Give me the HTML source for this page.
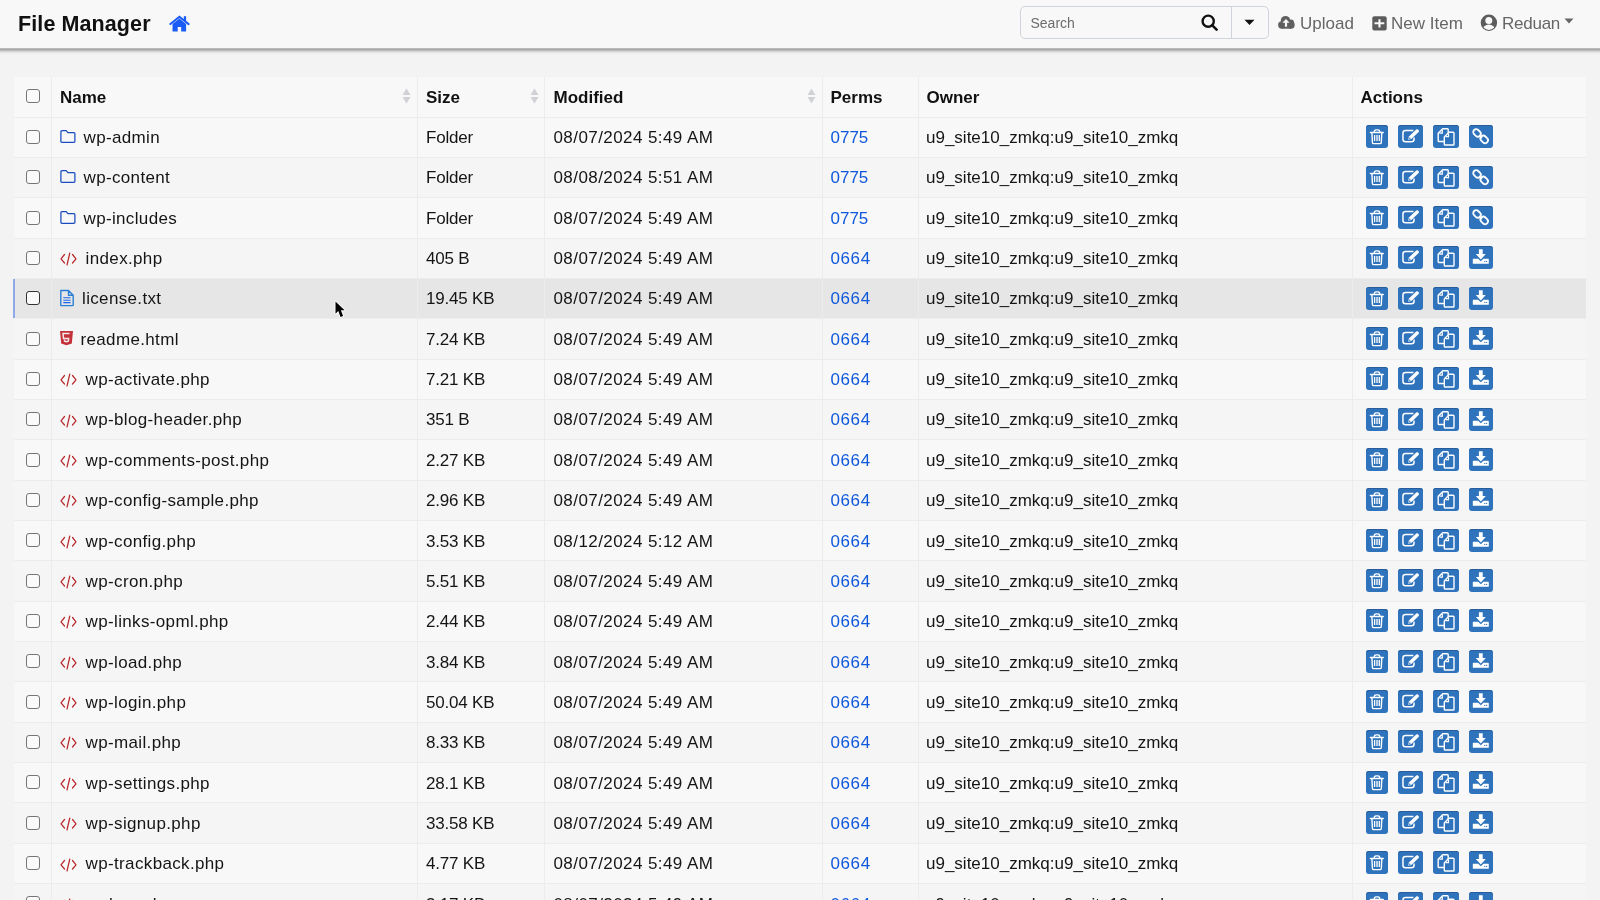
<!DOCTYPE html>
<html><head><meta charset="utf-8"><title>File Manager</title><style>
*{margin:0;padding:0;box-sizing:border-box}
html,body{width:1600px;height:900px;overflow:hidden}
body{-webkit-font-smoothing:antialiased;background:#f3f3f3;font-family:"Liberation Sans",sans-serif;color:#111;position:relative}
.nav{will-change:transform;position:absolute;left:0;top:0;width:1600px;height:48px;background:#f8f8f8;z-index:5}
.shadow{position:absolute;left:0;top:48px;width:1600px;height:7px;z-index:4;
 background:linear-gradient(#c2c2c2 0px,#a9a9a9 1.5px,#bcbcbc 2.5px,#d3d3d3 3.5px,#e6e6e6 4.5px,#eeeeee 5.5px,#f3f3f3 7px)}
.brand{position:absolute;left:18px;top:11.5px;font-size:21.5px;font-weight:bold;color:#111;letter-spacing:0.1px}
.search{position:absolute;left:1020px;top:6px;width:249px;height:33px;border:1px solid #cfd4da;border-radius:5px;background:#f8f8f8}
.search .ph{position:absolute;left:9.5px;top:7.5px;font-size:14px;color:#6c6c6c}
.search .div{position:absolute;left:210px;top:0;width:1px;height:31px;background:#cfd4da}
.navlink{position:absolute;top:14px;font-size:17px;color:#666}
.tbl{will-change:transform;position:absolute;left:14px;top:76.8px;width:1572px;height:824px;background:#f8f8f8}
.row{position:absolute;left:0;width:1572px;height:40.34px;border-top:1px solid #ececec}
.row.alt{background:#f5f5f5}
.row.hov{background:#e6e6e6}
.row.hov::before{content:"";position:absolute;left:-1px;top:0;width:2px;height:100%;background:#8ea8e8}
.vl{position:absolute;top:0;width:1px;height:824px;background:#ececec}
.cb{position:absolute;left:12px;top:12.3px;width:14px;height:14px;border:1.3px solid #767676;border-radius:3px;background:#fafafa}
.hov .cb{border-color:#333}
.fi{position:absolute}
.t{position:absolute;top:9.5px;font-size:17px;line-height:22px;white-space:nowrap;color:#151515}
.perm{color:#0f58dc}
.btn{position:absolute;top:7.6px;height:23px;background:#2e73bb;border-radius:3px;box-shadow:inset 0 1px 0 #285d9c}
.btn svg{position:absolute;left:0;top:0}
.hdr{position:absolute;left:0;top:-0.8px;width:1572px;height:40.4px}
.hdr .cb{top:13px}
.h{position:absolute;top:10.5px;font-size:17px;line-height:22px;font-weight:bold;color:#111}
.sort{position:absolute;top:12px}
</style></head>
<body>
<div class="nav">
<div class="brand">File Manager</div><svg style="position:absolute;left:169px;top:15px" width="21" height="18" viewBox="0 0 21 18"><path d="M10.4 3.6 L3.5 9.1 V16.1 Q3.5 16.6 4 16.6 H8.7 V11.9 H12.2 V16.6 H16.6 Q17.1 16.6 17.1 16.1 V9.1 Z" fill="#1a5cf5"/><path d="M1.4 9.1 L10.4 1.7 L19.6 9.1" fill="none" stroke="#1a5cf5" stroke-width="2" stroke-linejoin="miter" stroke-linecap="round"/><rect x="14.8" y="1.2" width="2.3" height="4.8" fill="#1a5cf5"/></svg>
<div class="search"><div class="ph">Search</div>
<svg style="position:absolute;left:180px;top:7.2px" width="18" height="17" viewBox="0 0 18 17"><circle cx="7.2" cy="7.2" r="5.6" fill="none" stroke="#111" stroke-width="2.4"/><path d="M11.3 11.3 L15.6 15.6" stroke="#111" stroke-width="2.6" stroke-linecap="round"/></svg>
<div class="div"></div>
<svg style="position:absolute;left:223px;top:12px" width="11" height="7" viewBox="0 0 11 7"><path d="M0.5 0.8 H10.5 L5.5 6 Z" fill="#111"/></svg>
</div>
<svg style="position:absolute;left:1278px;top:15px" width="18" height="15" viewBox="0 0 18 15"><g fill="#606060"><circle cx="7.5" cy="5.6" r="4.7"/><circle cx="13.1" cy="7.2" r="2.8"/><circle cx="3.8" cy="10" r="3.7"/><circle cx="13" cy="10" r="3.7"/><rect x="3.8" y="6.3" width="9.2" height="7.4"/></g><path d="M8 3.9 L11.6 7.7 H9.1 V11.7 H6.9 V7.7 H4.4 Z" fill="#f8f8f8"/></svg>
<div class="navlink" style="left:1300px">Upload</div>
<svg style="position:absolute;left:1372px;top:15.6px" width="15" height="15" viewBox="0 0 15 15"><rect x="0.3" y="0.2" width="14.4" height="14.2" rx="2" fill="#5c5c5c"/><path d="M7.5 3.3 V11.4 M2.5 7.3 H12.3" stroke="#f8f8f8" stroke-width="2.1"/></svg>
<div class="navlink" style="left:1391px">New Item</div>
<svg style="position:absolute;left:1480px;top:14px" width="18" height="18" viewBox="0 0 18 18"><defs><clipPath id="uc"><circle cx="8.9" cy="8.8" r="7.1"/></clipPath></defs><circle cx="8.9" cy="8.8" r="8.2" fill="#5c5c5c"/><ellipse cx="8.9" cy="16.2" rx="6.3" ry="5.7" fill="#f8f8f8" clip-path="url(#uc)"/><circle cx="8.8" cy="6.5" r="3.5" fill="#f8f8f8"/></svg>
<div class="navlink" style="left:1502px;letter-spacing:-0.25px">Reduan</div>
<svg style="position:absolute;left:1564px;top:18px" width="10" height="6" viewBox="0 0 10 6"><path d="M0.5 0.5 H9.5 L5 5.5 Z" fill="#666"/></svg>
</div><div class="shadow"></div>
<div class="tbl"><div class="hdr"><div class="cb"></div><div class="h" style="left:46px">Name</div><svg class="sort" style="left:388px" width="9" height="16" viewBox="0 0 9 16"><path d="M4.5 0.5 L8.5 7 H0.5 Z M0.5 9 H8.5 L4.5 15.5 Z" fill="#d0d2d5"/></svg><div class="h" style="left:412px">Size</div><svg class="sort" style="left:516px" width="9" height="16" viewBox="0 0 9 16"><path d="M4.5 0.5 L8.5 7 H0.5 Z M0.5 9 H8.5 L4.5 15.5 Z" fill="#d0d2d5"/></svg><div class="h" style="left:539.5px">Modified</div><svg class="sort" style="left:793px" width="9" height="16" viewBox="0 0 9 16"><path d="M4.5 0.5 L8.5 7 H0.5 Z M0.5 9 H8.5 L4.5 15.5 Z" fill="#d0d2d5"/></svg><div class="h" style="left:816.5px">Perms</div><div class="h" style="left:912.5px">Owner</div><div class="h" style="left:1346.5px">Actions</div></div><div class="row" style="top:39.60px"><div class="cb"></div><svg class="fi" style="left:45.5px;top:12.4px" width="16" height="14" viewBox="0 0 16 14"><path d="M0.9 1.8 Q0.9 0.7 2 0.7 H6.2 L7.9 2.6 H13.8 Q14.9 2.6 14.9 3.7 V11.2 Q14.9 12.3 13.8 12.3 H2 Q0.9 12.3 0.9 11.2 Z" fill="none" stroke="#1a4cc0" stroke-width="1.25" stroke-linejoin="round"/></svg><div class="t" style="left:69.5px;letter-spacing:0.35px">wp-admin</div><div class="t" style="left:412px;letter-spacing:-0.2px">Folder</div><div class="t" style="left:539.5px;letter-spacing:0.42px">08/07/2024 5:49 AM</div><div class="t perm" style="left:816.5px;letter-spacing:0">0775</div><div class="t" style="left:912px">u9_site10_zmkq:u9_site10_zmkq</div><div class="btn" style="left:1352px;width:22px"><svg width="22" height="23" viewBox="0 0 22 23"><path d="M4.4 7.4 H17.2" stroke="#fff" stroke-width="1.5" stroke-linecap="round"/><path d="M8.2 7.2 Q8.2 4.9 10 4.9 H12 Q13.8 4.9 13.8 7.2" fill="none" stroke="#fff" stroke-width="1.4"/><path d="M5.9 7.6 L6.4 17.4 Q6.5 18.6 7.7 18.6 H14 Q15.2 18.6 15.3 17.4 L15.8 7.6" fill="none" stroke="#fff" stroke-width="1.4"/><path d="M8.6 10 V15.9 M11 10 V15.9 M13.3 10 V15.9" stroke="#fff" stroke-width="1.3"/></svg></div><div class="btn" style="left:1384px;width:25px"><svg width="25" height="23" viewBox="0 0 25 23"><path d="M15.4 5.55 H7.5 Q4.95 5.55 4.95 8.1 V14.2 Q4.95 16.75 7.5 16.75 H13.5 Q16.05 16.75 16.05 14.2 V12.6" fill="none" stroke="#fff" stroke-width="1.5"/><path d="M10.2 14.8 L10.9 11.6 L18.2 4.6 Q19.1 3.8 20 4.6 L20.6 5.2 Q21.4 6.1 20.6 7 L13.4 14.1 Z" fill="#fff"/><circle cx="11.8" cy="13.2" r="0.75" fill="#2f72b8"/></svg></div><div class="btn" style="left:1419px;width:26px"><svg width="26" height="23" viewBox="0 0 26 23"><path d="M5.2 8.3 L9.7 3.7 H14.4 Q15.2 3.7 15.2 4.5 V15.7 Q15.2 16.5 14.4 16.5 H6 Q5.2 16.5 5.2 15.7 Z" fill="none" stroke="#fff" stroke-width="1.4" stroke-linejoin="round"/><path d="M9.3 5 V8.1 H6.4" fill="none" stroke="#fff" stroke-width="1.2"/><path d="M11.3 12 L15.9 7.3 H20.2 Q21 7.3 21 8.1 V19.2 Q21 20 20.2 20 H12.1 Q11.3 20 11.3 19.2 Z" fill="#2e73bb" stroke="#fff" stroke-width="1.4" stroke-linejoin="round"/><path d="M15.5 8.6 V11.7 H12.5" fill="none" stroke="#fff" stroke-width="1.2"/></svg></div><div class="btn" style="left:1455px;width:24px"><svg width="24" height="23" viewBox="0 0 24 23"><g fill="none" stroke="#fff" stroke-width="1.8"><rect x="3.9" y="5" width="8.2" height="5.8" rx="2.9" transform="rotate(45 8 7.9)"/><rect x="11.1" y="11.5" width="8.2" height="5.8" rx="2.9" transform="rotate(45 15.2 14.4)"/></g><path d="M10.2 10.2 L13 13" stroke="#fff" stroke-width="1.6"/></svg></div></div><div class="row alt" style="top:79.94px"><div class="cb"></div><svg class="fi" style="left:45.5px;top:12.4px" width="16" height="14" viewBox="0 0 16 14"><path d="M0.9 1.8 Q0.9 0.7 2 0.7 H6.2 L7.9 2.6 H13.8 Q14.9 2.6 14.9 3.7 V11.2 Q14.9 12.3 13.8 12.3 H2 Q0.9 12.3 0.9 11.2 Z" fill="none" stroke="#1a4cc0" stroke-width="1.25" stroke-linejoin="round"/></svg><div class="t" style="left:69.5px;letter-spacing:0.35px">wp-content</div><div class="t" style="left:412px;letter-spacing:-0.2px">Folder</div><div class="t" style="left:539.5px;letter-spacing:0.42px">08/08/2024 5:51 AM</div><div class="t perm" style="left:816.5px;letter-spacing:0">0775</div><div class="t" style="left:912px">u9_site10_zmkq:u9_site10_zmkq</div><div class="btn" style="left:1352px;width:22px"><svg width="22" height="23" viewBox="0 0 22 23"><path d="M4.4 7.4 H17.2" stroke="#fff" stroke-width="1.5" stroke-linecap="round"/><path d="M8.2 7.2 Q8.2 4.9 10 4.9 H12 Q13.8 4.9 13.8 7.2" fill="none" stroke="#fff" stroke-width="1.4"/><path d="M5.9 7.6 L6.4 17.4 Q6.5 18.6 7.7 18.6 H14 Q15.2 18.6 15.3 17.4 L15.8 7.6" fill="none" stroke="#fff" stroke-width="1.4"/><path d="M8.6 10 V15.9 M11 10 V15.9 M13.3 10 V15.9" stroke="#fff" stroke-width="1.3"/></svg></div><div class="btn" style="left:1384px;width:25px"><svg width="25" height="23" viewBox="0 0 25 23"><path d="M15.4 5.55 H7.5 Q4.95 5.55 4.95 8.1 V14.2 Q4.95 16.75 7.5 16.75 H13.5 Q16.05 16.75 16.05 14.2 V12.6" fill="none" stroke="#fff" stroke-width="1.5"/><path d="M10.2 14.8 L10.9 11.6 L18.2 4.6 Q19.1 3.8 20 4.6 L20.6 5.2 Q21.4 6.1 20.6 7 L13.4 14.1 Z" fill="#fff"/><circle cx="11.8" cy="13.2" r="0.75" fill="#2f72b8"/></svg></div><div class="btn" style="left:1419px;width:26px"><svg width="26" height="23" viewBox="0 0 26 23"><path d="M5.2 8.3 L9.7 3.7 H14.4 Q15.2 3.7 15.2 4.5 V15.7 Q15.2 16.5 14.4 16.5 H6 Q5.2 16.5 5.2 15.7 Z" fill="none" stroke="#fff" stroke-width="1.4" stroke-linejoin="round"/><path d="M9.3 5 V8.1 H6.4" fill="none" stroke="#fff" stroke-width="1.2"/><path d="M11.3 12 L15.9 7.3 H20.2 Q21 7.3 21 8.1 V19.2 Q21 20 20.2 20 H12.1 Q11.3 20 11.3 19.2 Z" fill="#2e73bb" stroke="#fff" stroke-width="1.4" stroke-linejoin="round"/><path d="M15.5 8.6 V11.7 H12.5" fill="none" stroke="#fff" stroke-width="1.2"/></svg></div><div class="btn" style="left:1455px;width:24px"><svg width="24" height="23" viewBox="0 0 24 23"><g fill="none" stroke="#fff" stroke-width="1.8"><rect x="3.9" y="5" width="8.2" height="5.8" rx="2.9" transform="rotate(45 8 7.9)"/><rect x="11.1" y="11.5" width="8.2" height="5.8" rx="2.9" transform="rotate(45 15.2 14.4)"/></g><path d="M10.2 10.2 L13 13" stroke="#fff" stroke-width="1.6"/></svg></div></div><div class="row" style="top:120.28px"><div class="cb"></div><svg class="fi" style="left:45.5px;top:12.4px" width="16" height="14" viewBox="0 0 16 14"><path d="M0.9 1.8 Q0.9 0.7 2 0.7 H6.2 L7.9 2.6 H13.8 Q14.9 2.6 14.9 3.7 V11.2 Q14.9 12.3 13.8 12.3 H2 Q0.9 12.3 0.9 11.2 Z" fill="none" stroke="#1a4cc0" stroke-width="1.25" stroke-linejoin="round"/></svg><div class="t" style="left:69.5px;letter-spacing:0.35px">wp-includes</div><div class="t" style="left:412px;letter-spacing:-0.2px">Folder</div><div class="t" style="left:539.5px;letter-spacing:0.42px">08/07/2024 5:49 AM</div><div class="t perm" style="left:816.5px;letter-spacing:0">0775</div><div class="t" style="left:912px">u9_site10_zmkq:u9_site10_zmkq</div><div class="btn" style="left:1352px;width:22px"><svg width="22" height="23" viewBox="0 0 22 23"><path d="M4.4 7.4 H17.2" stroke="#fff" stroke-width="1.5" stroke-linecap="round"/><path d="M8.2 7.2 Q8.2 4.9 10 4.9 H12 Q13.8 4.9 13.8 7.2" fill="none" stroke="#fff" stroke-width="1.4"/><path d="M5.9 7.6 L6.4 17.4 Q6.5 18.6 7.7 18.6 H14 Q15.2 18.6 15.3 17.4 L15.8 7.6" fill="none" stroke="#fff" stroke-width="1.4"/><path d="M8.6 10 V15.9 M11 10 V15.9 M13.3 10 V15.9" stroke="#fff" stroke-width="1.3"/></svg></div><div class="btn" style="left:1384px;width:25px"><svg width="25" height="23" viewBox="0 0 25 23"><path d="M15.4 5.55 H7.5 Q4.95 5.55 4.95 8.1 V14.2 Q4.95 16.75 7.5 16.75 H13.5 Q16.05 16.75 16.05 14.2 V12.6" fill="none" stroke="#fff" stroke-width="1.5"/><path d="M10.2 14.8 L10.9 11.6 L18.2 4.6 Q19.1 3.8 20 4.6 L20.6 5.2 Q21.4 6.1 20.6 7 L13.4 14.1 Z" fill="#fff"/><circle cx="11.8" cy="13.2" r="0.75" fill="#2f72b8"/></svg></div><div class="btn" style="left:1419px;width:26px"><svg width="26" height="23" viewBox="0 0 26 23"><path d="M5.2 8.3 L9.7 3.7 H14.4 Q15.2 3.7 15.2 4.5 V15.7 Q15.2 16.5 14.4 16.5 H6 Q5.2 16.5 5.2 15.7 Z" fill="none" stroke="#fff" stroke-width="1.4" stroke-linejoin="round"/><path d="M9.3 5 V8.1 H6.4" fill="none" stroke="#fff" stroke-width="1.2"/><path d="M11.3 12 L15.9 7.3 H20.2 Q21 7.3 21 8.1 V19.2 Q21 20 20.2 20 H12.1 Q11.3 20 11.3 19.2 Z" fill="#2e73bb" stroke="#fff" stroke-width="1.4" stroke-linejoin="round"/><path d="M15.5 8.6 V11.7 H12.5" fill="none" stroke="#fff" stroke-width="1.2"/></svg></div><div class="btn" style="left:1455px;width:24px"><svg width="24" height="23" viewBox="0 0 24 23"><g fill="none" stroke="#fff" stroke-width="1.8"><rect x="3.9" y="5" width="8.2" height="5.8" rx="2.9" transform="rotate(45 8 7.9)"/><rect x="11.1" y="11.5" width="8.2" height="5.8" rx="2.9" transform="rotate(45 15.2 14.4)"/></g><path d="M10.2 10.2 L13 13" stroke="#fff" stroke-width="1.6"/></svg></div></div><div class="row alt" style="top:160.62px"><div class="cb"></div><svg class="fi" style="left:46px;top:13.8px" width="17" height="14" viewBox="0 0 17 14"><path d="M4.5 2.5 L1 6.8 L4.5 11 M12.5 2.5 L16 6.8 L12.5 11 M9.8 1 L7 13" fill="none" stroke="#b8262a" stroke-width="1.2" stroke-linecap="round" stroke-linejoin="round"/></svg><div class="t" style="left:71.6px;letter-spacing:0.35px">index.php</div><div class="t" style="left:412px;letter-spacing:-0.2px">405 B</div><div class="t" style="left:539.5px;letter-spacing:0.42px">08/07/2024 5:49 AM</div><div class="t perm" style="left:816.5px;letter-spacing:0.6px">0664</div><div class="t" style="left:912px">u9_site10_zmkq:u9_site10_zmkq</div><div class="btn" style="left:1352px;width:22px"><svg width="22" height="23" viewBox="0 0 22 23"><path d="M4.4 7.4 H17.2" stroke="#fff" stroke-width="1.5" stroke-linecap="round"/><path d="M8.2 7.2 Q8.2 4.9 10 4.9 H12 Q13.8 4.9 13.8 7.2" fill="none" stroke="#fff" stroke-width="1.4"/><path d="M5.9 7.6 L6.4 17.4 Q6.5 18.6 7.7 18.6 H14 Q15.2 18.6 15.3 17.4 L15.8 7.6" fill="none" stroke="#fff" stroke-width="1.4"/><path d="M8.6 10 V15.9 M11 10 V15.9 M13.3 10 V15.9" stroke="#fff" stroke-width="1.3"/></svg></div><div class="btn" style="left:1384px;width:25px"><svg width="25" height="23" viewBox="0 0 25 23"><path d="M15.4 5.55 H7.5 Q4.95 5.55 4.95 8.1 V14.2 Q4.95 16.75 7.5 16.75 H13.5 Q16.05 16.75 16.05 14.2 V12.6" fill="none" stroke="#fff" stroke-width="1.5"/><path d="M10.2 14.8 L10.9 11.6 L18.2 4.6 Q19.1 3.8 20 4.6 L20.6 5.2 Q21.4 6.1 20.6 7 L13.4 14.1 Z" fill="#fff"/><circle cx="11.8" cy="13.2" r="0.75" fill="#2f72b8"/></svg></div><div class="btn" style="left:1419px;width:26px"><svg width="26" height="23" viewBox="0 0 26 23"><path d="M5.2 8.3 L9.7 3.7 H14.4 Q15.2 3.7 15.2 4.5 V15.7 Q15.2 16.5 14.4 16.5 H6 Q5.2 16.5 5.2 15.7 Z" fill="none" stroke="#fff" stroke-width="1.4" stroke-linejoin="round"/><path d="M9.3 5 V8.1 H6.4" fill="none" stroke="#fff" stroke-width="1.2"/><path d="M11.3 12 L15.9 7.3 H20.2 Q21 7.3 21 8.1 V19.2 Q21 20 20.2 20 H12.1 Q11.3 20 11.3 19.2 Z" fill="#2e73bb" stroke="#fff" stroke-width="1.4" stroke-linejoin="round"/><path d="M15.5 8.6 V11.7 H12.5" fill="none" stroke="#fff" stroke-width="1.2"/></svg></div><div class="btn" style="left:1455px;width:24px"><svg width="24" height="23" viewBox="0 0 24 23"><path d="M9.9 3.3 H13.7 V8 H16.8 L11.8 13.4 L6.8 8 H9.9 Z" fill="#fff"/><path d="M3.8 13.2 Q3.8 12.8 4.2 12.8 H9.2 L11.8 15.3 L14.4 12.8 H19.4 Q19.8 12.8 19.8 13.2 V17.4 Q19.8 17.8 19.4 17.8 H4.2 Q3.8 17.8 3.8 17.4 Z" fill="#fff"/><circle cx="15.8" cy="15.4" r="0.6" fill="#2e73bb"/><circle cx="17.6" cy="15.4" r="0.6" fill="#2e73bb"/></svg></div></div><div class="row hov" style="top:200.96px"><div class="cb"></div><svg class="fi" style="left:45px;top:10.4px" width="16" height="18" viewBox="0 0 16 18"><path d="M1.8 1.5 H9.5 L14.2 6.2 V16 Q14.2 16.6 13.6 16.6 H2.4 Q1.8 16.6 1.8 16 Z M9.5 1.5 V6.2 H14.2" fill="none" stroke="#2a7fd4" stroke-width="1.4" stroke-linejoin="round"/><path d="M4.3 8.8 H11.6 M4.3 11.2 H11.6 M4.3 13.6 H11.6" stroke="#1a66ee" stroke-width="1.1"/></svg><div class="t" style="left:68px;letter-spacing:0.35px">license.txt</div><div class="t" style="left:412px;letter-spacing:-0.2px">19.45 KB</div><div class="t" style="left:539.5px;letter-spacing:0.42px">08/07/2024 5:49 AM</div><div class="t perm" style="left:816.5px;letter-spacing:0.6px">0664</div><div class="t" style="left:912px">u9_site10_zmkq:u9_site10_zmkq</div><div class="btn" style="left:1352px;width:22px"><svg width="22" height="23" viewBox="0 0 22 23"><path d="M4.4 7.4 H17.2" stroke="#fff" stroke-width="1.5" stroke-linecap="round"/><path d="M8.2 7.2 Q8.2 4.9 10 4.9 H12 Q13.8 4.9 13.8 7.2" fill="none" stroke="#fff" stroke-width="1.4"/><path d="M5.9 7.6 L6.4 17.4 Q6.5 18.6 7.7 18.6 H14 Q15.2 18.6 15.3 17.4 L15.8 7.6" fill="none" stroke="#fff" stroke-width="1.4"/><path d="M8.6 10 V15.9 M11 10 V15.9 M13.3 10 V15.9" stroke="#fff" stroke-width="1.3"/></svg></div><div class="btn" style="left:1384px;width:25px"><svg width="25" height="23" viewBox="0 0 25 23"><path d="M15.4 5.55 H7.5 Q4.95 5.55 4.95 8.1 V14.2 Q4.95 16.75 7.5 16.75 H13.5 Q16.05 16.75 16.05 14.2 V12.6" fill="none" stroke="#fff" stroke-width="1.5"/><path d="M10.2 14.8 L10.9 11.6 L18.2 4.6 Q19.1 3.8 20 4.6 L20.6 5.2 Q21.4 6.1 20.6 7 L13.4 14.1 Z" fill="#fff"/><circle cx="11.8" cy="13.2" r="0.75" fill="#2f72b8"/></svg></div><div class="btn" style="left:1419px;width:26px"><svg width="26" height="23" viewBox="0 0 26 23"><path d="M5.2 8.3 L9.7 3.7 H14.4 Q15.2 3.7 15.2 4.5 V15.7 Q15.2 16.5 14.4 16.5 H6 Q5.2 16.5 5.2 15.7 Z" fill="none" stroke="#fff" stroke-width="1.4" stroke-linejoin="round"/><path d="M9.3 5 V8.1 H6.4" fill="none" stroke="#fff" stroke-width="1.2"/><path d="M11.3 12 L15.9 7.3 H20.2 Q21 7.3 21 8.1 V19.2 Q21 20 20.2 20 H12.1 Q11.3 20 11.3 19.2 Z" fill="#2e73bb" stroke="#fff" stroke-width="1.4" stroke-linejoin="round"/><path d="M15.5 8.6 V11.7 H12.5" fill="none" stroke="#fff" stroke-width="1.2"/></svg></div><div class="btn" style="left:1455px;width:24px"><svg width="24" height="23" viewBox="0 0 24 23"><path d="M9.9 3.3 H13.7 V8 H16.8 L11.8 13.4 L6.8 8 H9.9 Z" fill="#fff"/><path d="M3.8 13.2 Q3.8 12.8 4.2 12.8 H9.2 L11.8 15.3 L14.4 12.8 H19.4 Q19.8 12.8 19.8 13.2 V17.4 Q19.8 17.8 19.4 17.8 H4.2 Q3.8 17.8 3.8 17.4 Z" fill="#fff"/><circle cx="15.8" cy="15.4" r="0.6" fill="#2e73bb"/><circle cx="17.6" cy="15.4" r="0.6" fill="#2e73bb"/></svg></div></div><div class="row alt" style="top:241.30px"><div class="cb"></div><svg class="fi" style="left:44.7px;top:11px" width="15" height="16" viewBox="0 0 15 16"><path d="M1 1 H14 L12.8 13.6 L7.5 15.2 L2.2 13.6 Z" fill="#c4313a"/><path d="M10.6 3.4 H4 L4.5 8.6 H9.6 L9.3 11.1 L7.5 11.8 L5.6 11.1 L5.5 9.8" fill="none" stroke="#f3e6e6" stroke-width="1.5"/></svg><div class="t" style="left:66.5px;letter-spacing:0.35px">readme.html</div><div class="t" style="left:412px;letter-spacing:-0.2px">7.24 KB</div><div class="t" style="left:539.5px;letter-spacing:0.42px">08/07/2024 5:49 AM</div><div class="t perm" style="left:816.5px;letter-spacing:0.6px">0664</div><div class="t" style="left:912px">u9_site10_zmkq:u9_site10_zmkq</div><div class="btn" style="left:1352px;width:22px"><svg width="22" height="23" viewBox="0 0 22 23"><path d="M4.4 7.4 H17.2" stroke="#fff" stroke-width="1.5" stroke-linecap="round"/><path d="M8.2 7.2 Q8.2 4.9 10 4.9 H12 Q13.8 4.9 13.8 7.2" fill="none" stroke="#fff" stroke-width="1.4"/><path d="M5.9 7.6 L6.4 17.4 Q6.5 18.6 7.7 18.6 H14 Q15.2 18.6 15.3 17.4 L15.8 7.6" fill="none" stroke="#fff" stroke-width="1.4"/><path d="M8.6 10 V15.9 M11 10 V15.9 M13.3 10 V15.9" stroke="#fff" stroke-width="1.3"/></svg></div><div class="btn" style="left:1384px;width:25px"><svg width="25" height="23" viewBox="0 0 25 23"><path d="M15.4 5.55 H7.5 Q4.95 5.55 4.95 8.1 V14.2 Q4.95 16.75 7.5 16.75 H13.5 Q16.05 16.75 16.05 14.2 V12.6" fill="none" stroke="#fff" stroke-width="1.5"/><path d="M10.2 14.8 L10.9 11.6 L18.2 4.6 Q19.1 3.8 20 4.6 L20.6 5.2 Q21.4 6.1 20.6 7 L13.4 14.1 Z" fill="#fff"/><circle cx="11.8" cy="13.2" r="0.75" fill="#2f72b8"/></svg></div><div class="btn" style="left:1419px;width:26px"><svg width="26" height="23" viewBox="0 0 26 23"><path d="M5.2 8.3 L9.7 3.7 H14.4 Q15.2 3.7 15.2 4.5 V15.7 Q15.2 16.5 14.4 16.5 H6 Q5.2 16.5 5.2 15.7 Z" fill="none" stroke="#fff" stroke-width="1.4" stroke-linejoin="round"/><path d="M9.3 5 V8.1 H6.4" fill="none" stroke="#fff" stroke-width="1.2"/><path d="M11.3 12 L15.9 7.3 H20.2 Q21 7.3 21 8.1 V19.2 Q21 20 20.2 20 H12.1 Q11.3 20 11.3 19.2 Z" fill="#2e73bb" stroke="#fff" stroke-width="1.4" stroke-linejoin="round"/><path d="M15.5 8.6 V11.7 H12.5" fill="none" stroke="#fff" stroke-width="1.2"/></svg></div><div class="btn" style="left:1455px;width:24px"><svg width="24" height="23" viewBox="0 0 24 23"><path d="M9.9 3.3 H13.7 V8 H16.8 L11.8 13.4 L6.8 8 H9.9 Z" fill="#fff"/><path d="M3.8 13.2 Q3.8 12.8 4.2 12.8 H9.2 L11.8 15.3 L14.4 12.8 H19.4 Q19.8 12.8 19.8 13.2 V17.4 Q19.8 17.8 19.4 17.8 H4.2 Q3.8 17.8 3.8 17.4 Z" fill="#fff"/><circle cx="15.8" cy="15.4" r="0.6" fill="#2e73bb"/><circle cx="17.6" cy="15.4" r="0.6" fill="#2e73bb"/></svg></div></div><div class="row" style="top:281.64px"><div class="cb"></div><svg class="fi" style="left:46px;top:13.8px" width="17" height="14" viewBox="0 0 17 14"><path d="M4.5 2.5 L1 6.8 L4.5 11 M12.5 2.5 L16 6.8 L12.5 11 M9.8 1 L7 13" fill="none" stroke="#b8262a" stroke-width="1.2" stroke-linecap="round" stroke-linejoin="round"/></svg><div class="t" style="left:71.6px;letter-spacing:0.35px">wp-activate.php</div><div class="t" style="left:412px;letter-spacing:-0.2px">7.21 KB</div><div class="t" style="left:539.5px;letter-spacing:0.42px">08/07/2024 5:49 AM</div><div class="t perm" style="left:816.5px;letter-spacing:0.6px">0664</div><div class="t" style="left:912px">u9_site10_zmkq:u9_site10_zmkq</div><div class="btn" style="left:1352px;width:22px"><svg width="22" height="23" viewBox="0 0 22 23"><path d="M4.4 7.4 H17.2" stroke="#fff" stroke-width="1.5" stroke-linecap="round"/><path d="M8.2 7.2 Q8.2 4.9 10 4.9 H12 Q13.8 4.9 13.8 7.2" fill="none" stroke="#fff" stroke-width="1.4"/><path d="M5.9 7.6 L6.4 17.4 Q6.5 18.6 7.7 18.6 H14 Q15.2 18.6 15.3 17.4 L15.8 7.6" fill="none" stroke="#fff" stroke-width="1.4"/><path d="M8.6 10 V15.9 M11 10 V15.9 M13.3 10 V15.9" stroke="#fff" stroke-width="1.3"/></svg></div><div class="btn" style="left:1384px;width:25px"><svg width="25" height="23" viewBox="0 0 25 23"><path d="M15.4 5.55 H7.5 Q4.95 5.55 4.95 8.1 V14.2 Q4.95 16.75 7.5 16.75 H13.5 Q16.05 16.75 16.05 14.2 V12.6" fill="none" stroke="#fff" stroke-width="1.5"/><path d="M10.2 14.8 L10.9 11.6 L18.2 4.6 Q19.1 3.8 20 4.6 L20.6 5.2 Q21.4 6.1 20.6 7 L13.4 14.1 Z" fill="#fff"/><circle cx="11.8" cy="13.2" r="0.75" fill="#2f72b8"/></svg></div><div class="btn" style="left:1419px;width:26px"><svg width="26" height="23" viewBox="0 0 26 23"><path d="M5.2 8.3 L9.7 3.7 H14.4 Q15.2 3.7 15.2 4.5 V15.7 Q15.2 16.5 14.4 16.5 H6 Q5.2 16.5 5.2 15.7 Z" fill="none" stroke="#fff" stroke-width="1.4" stroke-linejoin="round"/><path d="M9.3 5 V8.1 H6.4" fill="none" stroke="#fff" stroke-width="1.2"/><path d="M11.3 12 L15.9 7.3 H20.2 Q21 7.3 21 8.1 V19.2 Q21 20 20.2 20 H12.1 Q11.3 20 11.3 19.2 Z" fill="#2e73bb" stroke="#fff" stroke-width="1.4" stroke-linejoin="round"/><path d="M15.5 8.6 V11.7 H12.5" fill="none" stroke="#fff" stroke-width="1.2"/></svg></div><div class="btn" style="left:1455px;width:24px"><svg width="24" height="23" viewBox="0 0 24 23"><path d="M9.9 3.3 H13.7 V8 H16.8 L11.8 13.4 L6.8 8 H9.9 Z" fill="#fff"/><path d="M3.8 13.2 Q3.8 12.8 4.2 12.8 H9.2 L11.8 15.3 L14.4 12.8 H19.4 Q19.8 12.8 19.8 13.2 V17.4 Q19.8 17.8 19.4 17.8 H4.2 Q3.8 17.8 3.8 17.4 Z" fill="#fff"/><circle cx="15.8" cy="15.4" r="0.6" fill="#2e73bb"/><circle cx="17.6" cy="15.4" r="0.6" fill="#2e73bb"/></svg></div></div><div class="row alt" style="top:321.98px"><div class="cb"></div><svg class="fi" style="left:46px;top:13.8px" width="17" height="14" viewBox="0 0 17 14"><path d="M4.5 2.5 L1 6.8 L4.5 11 M12.5 2.5 L16 6.8 L12.5 11 M9.8 1 L7 13" fill="none" stroke="#b8262a" stroke-width="1.2" stroke-linecap="round" stroke-linejoin="round"/></svg><div class="t" style="left:71.6px;letter-spacing:0.35px">wp-blog-header.php</div><div class="t" style="left:412px;letter-spacing:-0.2px">351 B</div><div class="t" style="left:539.5px;letter-spacing:0.42px">08/07/2024 5:49 AM</div><div class="t perm" style="left:816.5px;letter-spacing:0.6px">0664</div><div class="t" style="left:912px">u9_site10_zmkq:u9_site10_zmkq</div><div class="btn" style="left:1352px;width:22px"><svg width="22" height="23" viewBox="0 0 22 23"><path d="M4.4 7.4 H17.2" stroke="#fff" stroke-width="1.5" stroke-linecap="round"/><path d="M8.2 7.2 Q8.2 4.9 10 4.9 H12 Q13.8 4.9 13.8 7.2" fill="none" stroke="#fff" stroke-width="1.4"/><path d="M5.9 7.6 L6.4 17.4 Q6.5 18.6 7.7 18.6 H14 Q15.2 18.6 15.3 17.4 L15.8 7.6" fill="none" stroke="#fff" stroke-width="1.4"/><path d="M8.6 10 V15.9 M11 10 V15.9 M13.3 10 V15.9" stroke="#fff" stroke-width="1.3"/></svg></div><div class="btn" style="left:1384px;width:25px"><svg width="25" height="23" viewBox="0 0 25 23"><path d="M15.4 5.55 H7.5 Q4.95 5.55 4.95 8.1 V14.2 Q4.95 16.75 7.5 16.75 H13.5 Q16.05 16.75 16.05 14.2 V12.6" fill="none" stroke="#fff" stroke-width="1.5"/><path d="M10.2 14.8 L10.9 11.6 L18.2 4.6 Q19.1 3.8 20 4.6 L20.6 5.2 Q21.4 6.1 20.6 7 L13.4 14.1 Z" fill="#fff"/><circle cx="11.8" cy="13.2" r="0.75" fill="#2f72b8"/></svg></div><div class="btn" style="left:1419px;width:26px"><svg width="26" height="23" viewBox="0 0 26 23"><path d="M5.2 8.3 L9.7 3.7 H14.4 Q15.2 3.7 15.2 4.5 V15.7 Q15.2 16.5 14.4 16.5 H6 Q5.2 16.5 5.2 15.7 Z" fill="none" stroke="#fff" stroke-width="1.4" stroke-linejoin="round"/><path d="M9.3 5 V8.1 H6.4" fill="none" stroke="#fff" stroke-width="1.2"/><path d="M11.3 12 L15.9 7.3 H20.2 Q21 7.3 21 8.1 V19.2 Q21 20 20.2 20 H12.1 Q11.3 20 11.3 19.2 Z" fill="#2e73bb" stroke="#fff" stroke-width="1.4" stroke-linejoin="round"/><path d="M15.5 8.6 V11.7 H12.5" fill="none" stroke="#fff" stroke-width="1.2"/></svg></div><div class="btn" style="left:1455px;width:24px"><svg width="24" height="23" viewBox="0 0 24 23"><path d="M9.9 3.3 H13.7 V8 H16.8 L11.8 13.4 L6.8 8 H9.9 Z" fill="#fff"/><path d="M3.8 13.2 Q3.8 12.8 4.2 12.8 H9.2 L11.8 15.3 L14.4 12.8 H19.4 Q19.8 12.8 19.8 13.2 V17.4 Q19.8 17.8 19.4 17.8 H4.2 Q3.8 17.8 3.8 17.4 Z" fill="#fff"/><circle cx="15.8" cy="15.4" r="0.6" fill="#2e73bb"/><circle cx="17.6" cy="15.4" r="0.6" fill="#2e73bb"/></svg></div></div><div class="row" style="top:362.32px"><div class="cb"></div><svg class="fi" style="left:46px;top:13.8px" width="17" height="14" viewBox="0 0 17 14"><path d="M4.5 2.5 L1 6.8 L4.5 11 M12.5 2.5 L16 6.8 L12.5 11 M9.8 1 L7 13" fill="none" stroke="#b8262a" stroke-width="1.2" stroke-linecap="round" stroke-linejoin="round"/></svg><div class="t" style="left:71.6px;letter-spacing:0.35px">wp-comments-post.php</div><div class="t" style="left:412px;letter-spacing:-0.2px">2.27 KB</div><div class="t" style="left:539.5px;letter-spacing:0.42px">08/07/2024 5:49 AM</div><div class="t perm" style="left:816.5px;letter-spacing:0.6px">0664</div><div class="t" style="left:912px">u9_site10_zmkq:u9_site10_zmkq</div><div class="btn" style="left:1352px;width:22px"><svg width="22" height="23" viewBox="0 0 22 23"><path d="M4.4 7.4 H17.2" stroke="#fff" stroke-width="1.5" stroke-linecap="round"/><path d="M8.2 7.2 Q8.2 4.9 10 4.9 H12 Q13.8 4.9 13.8 7.2" fill="none" stroke="#fff" stroke-width="1.4"/><path d="M5.9 7.6 L6.4 17.4 Q6.5 18.6 7.7 18.6 H14 Q15.2 18.6 15.3 17.4 L15.8 7.6" fill="none" stroke="#fff" stroke-width="1.4"/><path d="M8.6 10 V15.9 M11 10 V15.9 M13.3 10 V15.9" stroke="#fff" stroke-width="1.3"/></svg></div><div class="btn" style="left:1384px;width:25px"><svg width="25" height="23" viewBox="0 0 25 23"><path d="M15.4 5.55 H7.5 Q4.95 5.55 4.95 8.1 V14.2 Q4.95 16.75 7.5 16.75 H13.5 Q16.05 16.75 16.05 14.2 V12.6" fill="none" stroke="#fff" stroke-width="1.5"/><path d="M10.2 14.8 L10.9 11.6 L18.2 4.6 Q19.1 3.8 20 4.6 L20.6 5.2 Q21.4 6.1 20.6 7 L13.4 14.1 Z" fill="#fff"/><circle cx="11.8" cy="13.2" r="0.75" fill="#2f72b8"/></svg></div><div class="btn" style="left:1419px;width:26px"><svg width="26" height="23" viewBox="0 0 26 23"><path d="M5.2 8.3 L9.7 3.7 H14.4 Q15.2 3.7 15.2 4.5 V15.7 Q15.2 16.5 14.4 16.5 H6 Q5.2 16.5 5.2 15.7 Z" fill="none" stroke="#fff" stroke-width="1.4" stroke-linejoin="round"/><path d="M9.3 5 V8.1 H6.4" fill="none" stroke="#fff" stroke-width="1.2"/><path d="M11.3 12 L15.9 7.3 H20.2 Q21 7.3 21 8.1 V19.2 Q21 20 20.2 20 H12.1 Q11.3 20 11.3 19.2 Z" fill="#2e73bb" stroke="#fff" stroke-width="1.4" stroke-linejoin="round"/><path d="M15.5 8.6 V11.7 H12.5" fill="none" stroke="#fff" stroke-width="1.2"/></svg></div><div class="btn" style="left:1455px;width:24px"><svg width="24" height="23" viewBox="0 0 24 23"><path d="M9.9 3.3 H13.7 V8 H16.8 L11.8 13.4 L6.8 8 H9.9 Z" fill="#fff"/><path d="M3.8 13.2 Q3.8 12.8 4.2 12.8 H9.2 L11.8 15.3 L14.4 12.8 H19.4 Q19.8 12.8 19.8 13.2 V17.4 Q19.8 17.8 19.4 17.8 H4.2 Q3.8 17.8 3.8 17.4 Z" fill="#fff"/><circle cx="15.8" cy="15.4" r="0.6" fill="#2e73bb"/><circle cx="17.6" cy="15.4" r="0.6" fill="#2e73bb"/></svg></div></div><div class="row alt" style="top:402.66px"><div class="cb"></div><svg class="fi" style="left:46px;top:13.8px" width="17" height="14" viewBox="0 0 17 14"><path d="M4.5 2.5 L1 6.8 L4.5 11 M12.5 2.5 L16 6.8 L12.5 11 M9.8 1 L7 13" fill="none" stroke="#b8262a" stroke-width="1.2" stroke-linecap="round" stroke-linejoin="round"/></svg><div class="t" style="left:71.6px;letter-spacing:0.35px">wp-config-sample.php</div><div class="t" style="left:412px;letter-spacing:-0.2px">2.96 KB</div><div class="t" style="left:539.5px;letter-spacing:0.42px">08/07/2024 5:49 AM</div><div class="t perm" style="left:816.5px;letter-spacing:0.6px">0664</div><div class="t" style="left:912px">u9_site10_zmkq:u9_site10_zmkq</div><div class="btn" style="left:1352px;width:22px"><svg width="22" height="23" viewBox="0 0 22 23"><path d="M4.4 7.4 H17.2" stroke="#fff" stroke-width="1.5" stroke-linecap="round"/><path d="M8.2 7.2 Q8.2 4.9 10 4.9 H12 Q13.8 4.9 13.8 7.2" fill="none" stroke="#fff" stroke-width="1.4"/><path d="M5.9 7.6 L6.4 17.4 Q6.5 18.6 7.7 18.6 H14 Q15.2 18.6 15.3 17.4 L15.8 7.6" fill="none" stroke="#fff" stroke-width="1.4"/><path d="M8.6 10 V15.9 M11 10 V15.9 M13.3 10 V15.9" stroke="#fff" stroke-width="1.3"/></svg></div><div class="btn" style="left:1384px;width:25px"><svg width="25" height="23" viewBox="0 0 25 23"><path d="M15.4 5.55 H7.5 Q4.95 5.55 4.95 8.1 V14.2 Q4.95 16.75 7.5 16.75 H13.5 Q16.05 16.75 16.05 14.2 V12.6" fill="none" stroke="#fff" stroke-width="1.5"/><path d="M10.2 14.8 L10.9 11.6 L18.2 4.6 Q19.1 3.8 20 4.6 L20.6 5.2 Q21.4 6.1 20.6 7 L13.4 14.1 Z" fill="#fff"/><circle cx="11.8" cy="13.2" r="0.75" fill="#2f72b8"/></svg></div><div class="btn" style="left:1419px;width:26px"><svg width="26" height="23" viewBox="0 0 26 23"><path d="M5.2 8.3 L9.7 3.7 H14.4 Q15.2 3.7 15.2 4.5 V15.7 Q15.2 16.5 14.4 16.5 H6 Q5.2 16.5 5.2 15.7 Z" fill="none" stroke="#fff" stroke-width="1.4" stroke-linejoin="round"/><path d="M9.3 5 V8.1 H6.4" fill="none" stroke="#fff" stroke-width="1.2"/><path d="M11.3 12 L15.9 7.3 H20.2 Q21 7.3 21 8.1 V19.2 Q21 20 20.2 20 H12.1 Q11.3 20 11.3 19.2 Z" fill="#2e73bb" stroke="#fff" stroke-width="1.4" stroke-linejoin="round"/><path d="M15.5 8.6 V11.7 H12.5" fill="none" stroke="#fff" stroke-width="1.2"/></svg></div><div class="btn" style="left:1455px;width:24px"><svg width="24" height="23" viewBox="0 0 24 23"><path d="M9.9 3.3 H13.7 V8 H16.8 L11.8 13.4 L6.8 8 H9.9 Z" fill="#fff"/><path d="M3.8 13.2 Q3.8 12.8 4.2 12.8 H9.2 L11.8 15.3 L14.4 12.8 H19.4 Q19.8 12.8 19.8 13.2 V17.4 Q19.8 17.8 19.4 17.8 H4.2 Q3.8 17.8 3.8 17.4 Z" fill="#fff"/><circle cx="15.8" cy="15.4" r="0.6" fill="#2e73bb"/><circle cx="17.6" cy="15.4" r="0.6" fill="#2e73bb"/></svg></div></div><div class="row" style="top:443.00px"><div class="cb"></div><svg class="fi" style="left:46px;top:13.8px" width="17" height="14" viewBox="0 0 17 14"><path d="M4.5 2.5 L1 6.8 L4.5 11 M12.5 2.5 L16 6.8 L12.5 11 M9.8 1 L7 13" fill="none" stroke="#b8262a" stroke-width="1.2" stroke-linecap="round" stroke-linejoin="round"/></svg><div class="t" style="left:71.6px;letter-spacing:0.35px">wp-config.php</div><div class="t" style="left:412px;letter-spacing:-0.2px">3.53 KB</div><div class="t" style="left:539.5px;letter-spacing:0.42px">08/12/2024 5:12 AM</div><div class="t perm" style="left:816.5px;letter-spacing:0.6px">0664</div><div class="t" style="left:912px">u9_site10_zmkq:u9_site10_zmkq</div><div class="btn" style="left:1352px;width:22px"><svg width="22" height="23" viewBox="0 0 22 23"><path d="M4.4 7.4 H17.2" stroke="#fff" stroke-width="1.5" stroke-linecap="round"/><path d="M8.2 7.2 Q8.2 4.9 10 4.9 H12 Q13.8 4.9 13.8 7.2" fill="none" stroke="#fff" stroke-width="1.4"/><path d="M5.9 7.6 L6.4 17.4 Q6.5 18.6 7.7 18.6 H14 Q15.2 18.6 15.3 17.4 L15.8 7.6" fill="none" stroke="#fff" stroke-width="1.4"/><path d="M8.6 10 V15.9 M11 10 V15.9 M13.3 10 V15.9" stroke="#fff" stroke-width="1.3"/></svg></div><div class="btn" style="left:1384px;width:25px"><svg width="25" height="23" viewBox="0 0 25 23"><path d="M15.4 5.55 H7.5 Q4.95 5.55 4.95 8.1 V14.2 Q4.95 16.75 7.5 16.75 H13.5 Q16.05 16.75 16.05 14.2 V12.6" fill="none" stroke="#fff" stroke-width="1.5"/><path d="M10.2 14.8 L10.9 11.6 L18.2 4.6 Q19.1 3.8 20 4.6 L20.6 5.2 Q21.4 6.1 20.6 7 L13.4 14.1 Z" fill="#fff"/><circle cx="11.8" cy="13.2" r="0.75" fill="#2f72b8"/></svg></div><div class="btn" style="left:1419px;width:26px"><svg width="26" height="23" viewBox="0 0 26 23"><path d="M5.2 8.3 L9.7 3.7 H14.4 Q15.2 3.7 15.2 4.5 V15.7 Q15.2 16.5 14.4 16.5 H6 Q5.2 16.5 5.2 15.7 Z" fill="none" stroke="#fff" stroke-width="1.4" stroke-linejoin="round"/><path d="M9.3 5 V8.1 H6.4" fill="none" stroke="#fff" stroke-width="1.2"/><path d="M11.3 12 L15.9 7.3 H20.2 Q21 7.3 21 8.1 V19.2 Q21 20 20.2 20 H12.1 Q11.3 20 11.3 19.2 Z" fill="#2e73bb" stroke="#fff" stroke-width="1.4" stroke-linejoin="round"/><path d="M15.5 8.6 V11.7 H12.5" fill="none" stroke="#fff" stroke-width="1.2"/></svg></div><div class="btn" style="left:1455px;width:24px"><svg width="24" height="23" viewBox="0 0 24 23"><path d="M9.9 3.3 H13.7 V8 H16.8 L11.8 13.4 L6.8 8 H9.9 Z" fill="#fff"/><path d="M3.8 13.2 Q3.8 12.8 4.2 12.8 H9.2 L11.8 15.3 L14.4 12.8 H19.4 Q19.8 12.8 19.8 13.2 V17.4 Q19.8 17.8 19.4 17.8 H4.2 Q3.8 17.8 3.8 17.4 Z" fill="#fff"/><circle cx="15.8" cy="15.4" r="0.6" fill="#2e73bb"/><circle cx="17.6" cy="15.4" r="0.6" fill="#2e73bb"/></svg></div></div><div class="row alt" style="top:483.34px"><div class="cb"></div><svg class="fi" style="left:46px;top:13.8px" width="17" height="14" viewBox="0 0 17 14"><path d="M4.5 2.5 L1 6.8 L4.5 11 M12.5 2.5 L16 6.8 L12.5 11 M9.8 1 L7 13" fill="none" stroke="#b8262a" stroke-width="1.2" stroke-linecap="round" stroke-linejoin="round"/></svg><div class="t" style="left:71.6px;letter-spacing:0.35px">wp-cron.php</div><div class="t" style="left:412px;letter-spacing:-0.2px">5.51 KB</div><div class="t" style="left:539.5px;letter-spacing:0.42px">08/07/2024 5:49 AM</div><div class="t perm" style="left:816.5px;letter-spacing:0.6px">0664</div><div class="t" style="left:912px">u9_site10_zmkq:u9_site10_zmkq</div><div class="btn" style="left:1352px;width:22px"><svg width="22" height="23" viewBox="0 0 22 23"><path d="M4.4 7.4 H17.2" stroke="#fff" stroke-width="1.5" stroke-linecap="round"/><path d="M8.2 7.2 Q8.2 4.9 10 4.9 H12 Q13.8 4.9 13.8 7.2" fill="none" stroke="#fff" stroke-width="1.4"/><path d="M5.9 7.6 L6.4 17.4 Q6.5 18.6 7.7 18.6 H14 Q15.2 18.6 15.3 17.4 L15.8 7.6" fill="none" stroke="#fff" stroke-width="1.4"/><path d="M8.6 10 V15.9 M11 10 V15.9 M13.3 10 V15.9" stroke="#fff" stroke-width="1.3"/></svg></div><div class="btn" style="left:1384px;width:25px"><svg width="25" height="23" viewBox="0 0 25 23"><path d="M15.4 5.55 H7.5 Q4.95 5.55 4.95 8.1 V14.2 Q4.95 16.75 7.5 16.75 H13.5 Q16.05 16.75 16.05 14.2 V12.6" fill="none" stroke="#fff" stroke-width="1.5"/><path d="M10.2 14.8 L10.9 11.6 L18.2 4.6 Q19.1 3.8 20 4.6 L20.6 5.2 Q21.4 6.1 20.6 7 L13.4 14.1 Z" fill="#fff"/><circle cx="11.8" cy="13.2" r="0.75" fill="#2f72b8"/></svg></div><div class="btn" style="left:1419px;width:26px"><svg width="26" height="23" viewBox="0 0 26 23"><path d="M5.2 8.3 L9.7 3.7 H14.4 Q15.2 3.7 15.2 4.5 V15.7 Q15.2 16.5 14.4 16.5 H6 Q5.2 16.5 5.2 15.7 Z" fill="none" stroke="#fff" stroke-width="1.4" stroke-linejoin="round"/><path d="M9.3 5 V8.1 H6.4" fill="none" stroke="#fff" stroke-width="1.2"/><path d="M11.3 12 L15.9 7.3 H20.2 Q21 7.3 21 8.1 V19.2 Q21 20 20.2 20 H12.1 Q11.3 20 11.3 19.2 Z" fill="#2e73bb" stroke="#fff" stroke-width="1.4" stroke-linejoin="round"/><path d="M15.5 8.6 V11.7 H12.5" fill="none" stroke="#fff" stroke-width="1.2"/></svg></div><div class="btn" style="left:1455px;width:24px"><svg width="24" height="23" viewBox="0 0 24 23"><path d="M9.9 3.3 H13.7 V8 H16.8 L11.8 13.4 L6.8 8 H9.9 Z" fill="#fff"/><path d="M3.8 13.2 Q3.8 12.8 4.2 12.8 H9.2 L11.8 15.3 L14.4 12.8 H19.4 Q19.8 12.8 19.8 13.2 V17.4 Q19.8 17.8 19.4 17.8 H4.2 Q3.8 17.8 3.8 17.4 Z" fill="#fff"/><circle cx="15.8" cy="15.4" r="0.6" fill="#2e73bb"/><circle cx="17.6" cy="15.4" r="0.6" fill="#2e73bb"/></svg></div></div><div class="row" style="top:523.68px"><div class="cb"></div><svg class="fi" style="left:46px;top:13.8px" width="17" height="14" viewBox="0 0 17 14"><path d="M4.5 2.5 L1 6.8 L4.5 11 M12.5 2.5 L16 6.8 L12.5 11 M9.8 1 L7 13" fill="none" stroke="#b8262a" stroke-width="1.2" stroke-linecap="round" stroke-linejoin="round"/></svg><div class="t" style="left:71.6px;letter-spacing:0.35px">wp-links-opml.php</div><div class="t" style="left:412px;letter-spacing:-0.2px">2.44 KB</div><div class="t" style="left:539.5px;letter-spacing:0.42px">08/07/2024 5:49 AM</div><div class="t perm" style="left:816.5px;letter-spacing:0.6px">0664</div><div class="t" style="left:912px">u9_site10_zmkq:u9_site10_zmkq</div><div class="btn" style="left:1352px;width:22px"><svg width="22" height="23" viewBox="0 0 22 23"><path d="M4.4 7.4 H17.2" stroke="#fff" stroke-width="1.5" stroke-linecap="round"/><path d="M8.2 7.2 Q8.2 4.9 10 4.9 H12 Q13.8 4.9 13.8 7.2" fill="none" stroke="#fff" stroke-width="1.4"/><path d="M5.9 7.6 L6.4 17.4 Q6.5 18.6 7.7 18.6 H14 Q15.2 18.6 15.3 17.4 L15.8 7.6" fill="none" stroke="#fff" stroke-width="1.4"/><path d="M8.6 10 V15.9 M11 10 V15.9 M13.3 10 V15.9" stroke="#fff" stroke-width="1.3"/></svg></div><div class="btn" style="left:1384px;width:25px"><svg width="25" height="23" viewBox="0 0 25 23"><path d="M15.4 5.55 H7.5 Q4.95 5.55 4.95 8.1 V14.2 Q4.95 16.75 7.5 16.75 H13.5 Q16.05 16.75 16.05 14.2 V12.6" fill="none" stroke="#fff" stroke-width="1.5"/><path d="M10.2 14.8 L10.9 11.6 L18.2 4.6 Q19.1 3.8 20 4.6 L20.6 5.2 Q21.4 6.1 20.6 7 L13.4 14.1 Z" fill="#fff"/><circle cx="11.8" cy="13.2" r="0.75" fill="#2f72b8"/></svg></div><div class="btn" style="left:1419px;width:26px"><svg width="26" height="23" viewBox="0 0 26 23"><path d="M5.2 8.3 L9.7 3.7 H14.4 Q15.2 3.7 15.2 4.5 V15.7 Q15.2 16.5 14.4 16.5 H6 Q5.2 16.5 5.2 15.7 Z" fill="none" stroke="#fff" stroke-width="1.4" stroke-linejoin="round"/><path d="M9.3 5 V8.1 H6.4" fill="none" stroke="#fff" stroke-width="1.2"/><path d="M11.3 12 L15.9 7.3 H20.2 Q21 7.3 21 8.1 V19.2 Q21 20 20.2 20 H12.1 Q11.3 20 11.3 19.2 Z" fill="#2e73bb" stroke="#fff" stroke-width="1.4" stroke-linejoin="round"/><path d="M15.5 8.6 V11.7 H12.5" fill="none" stroke="#fff" stroke-width="1.2"/></svg></div><div class="btn" style="left:1455px;width:24px"><svg width="24" height="23" viewBox="0 0 24 23"><path d="M9.9 3.3 H13.7 V8 H16.8 L11.8 13.4 L6.8 8 H9.9 Z" fill="#fff"/><path d="M3.8 13.2 Q3.8 12.8 4.2 12.8 H9.2 L11.8 15.3 L14.4 12.8 H19.4 Q19.8 12.8 19.8 13.2 V17.4 Q19.8 17.8 19.4 17.8 H4.2 Q3.8 17.8 3.8 17.4 Z" fill="#fff"/><circle cx="15.8" cy="15.4" r="0.6" fill="#2e73bb"/><circle cx="17.6" cy="15.4" r="0.6" fill="#2e73bb"/></svg></div></div><div class="row alt" style="top:564.02px"><div class="cb"></div><svg class="fi" style="left:46px;top:13.8px" width="17" height="14" viewBox="0 0 17 14"><path d="M4.5 2.5 L1 6.8 L4.5 11 M12.5 2.5 L16 6.8 L12.5 11 M9.8 1 L7 13" fill="none" stroke="#b8262a" stroke-width="1.2" stroke-linecap="round" stroke-linejoin="round"/></svg><div class="t" style="left:71.6px;letter-spacing:0.35px">wp-load.php</div><div class="t" style="left:412px;letter-spacing:-0.2px">3.84 KB</div><div class="t" style="left:539.5px;letter-spacing:0.42px">08/07/2024 5:49 AM</div><div class="t perm" style="left:816.5px;letter-spacing:0.6px">0664</div><div class="t" style="left:912px">u9_site10_zmkq:u9_site10_zmkq</div><div class="btn" style="left:1352px;width:22px"><svg width="22" height="23" viewBox="0 0 22 23"><path d="M4.4 7.4 H17.2" stroke="#fff" stroke-width="1.5" stroke-linecap="round"/><path d="M8.2 7.2 Q8.2 4.9 10 4.9 H12 Q13.8 4.9 13.8 7.2" fill="none" stroke="#fff" stroke-width="1.4"/><path d="M5.9 7.6 L6.4 17.4 Q6.5 18.6 7.7 18.6 H14 Q15.2 18.6 15.3 17.4 L15.8 7.6" fill="none" stroke="#fff" stroke-width="1.4"/><path d="M8.6 10 V15.9 M11 10 V15.9 M13.3 10 V15.9" stroke="#fff" stroke-width="1.3"/></svg></div><div class="btn" style="left:1384px;width:25px"><svg width="25" height="23" viewBox="0 0 25 23"><path d="M15.4 5.55 H7.5 Q4.95 5.55 4.95 8.1 V14.2 Q4.95 16.75 7.5 16.75 H13.5 Q16.05 16.75 16.05 14.2 V12.6" fill="none" stroke="#fff" stroke-width="1.5"/><path d="M10.2 14.8 L10.9 11.6 L18.2 4.6 Q19.1 3.8 20 4.6 L20.6 5.2 Q21.4 6.1 20.6 7 L13.4 14.1 Z" fill="#fff"/><circle cx="11.8" cy="13.2" r="0.75" fill="#2f72b8"/></svg></div><div class="btn" style="left:1419px;width:26px"><svg width="26" height="23" viewBox="0 0 26 23"><path d="M5.2 8.3 L9.7 3.7 H14.4 Q15.2 3.7 15.2 4.5 V15.7 Q15.2 16.5 14.4 16.5 H6 Q5.2 16.5 5.2 15.7 Z" fill="none" stroke="#fff" stroke-width="1.4" stroke-linejoin="round"/><path d="M9.3 5 V8.1 H6.4" fill="none" stroke="#fff" stroke-width="1.2"/><path d="M11.3 12 L15.9 7.3 H20.2 Q21 7.3 21 8.1 V19.2 Q21 20 20.2 20 H12.1 Q11.3 20 11.3 19.2 Z" fill="#2e73bb" stroke="#fff" stroke-width="1.4" stroke-linejoin="round"/><path d="M15.5 8.6 V11.7 H12.5" fill="none" stroke="#fff" stroke-width="1.2"/></svg></div><div class="btn" style="left:1455px;width:24px"><svg width="24" height="23" viewBox="0 0 24 23"><path d="M9.9 3.3 H13.7 V8 H16.8 L11.8 13.4 L6.8 8 H9.9 Z" fill="#fff"/><path d="M3.8 13.2 Q3.8 12.8 4.2 12.8 H9.2 L11.8 15.3 L14.4 12.8 H19.4 Q19.8 12.8 19.8 13.2 V17.4 Q19.8 17.8 19.4 17.8 H4.2 Q3.8 17.8 3.8 17.4 Z" fill="#fff"/><circle cx="15.8" cy="15.4" r="0.6" fill="#2e73bb"/><circle cx="17.6" cy="15.4" r="0.6" fill="#2e73bb"/></svg></div></div><div class="row" style="top:604.36px"><div class="cb"></div><svg class="fi" style="left:46px;top:13.8px" width="17" height="14" viewBox="0 0 17 14"><path d="M4.5 2.5 L1 6.8 L4.5 11 M12.5 2.5 L16 6.8 L12.5 11 M9.8 1 L7 13" fill="none" stroke="#b8262a" stroke-width="1.2" stroke-linecap="round" stroke-linejoin="round"/></svg><div class="t" style="left:71.6px;letter-spacing:0.35px">wp-login.php</div><div class="t" style="left:412px;letter-spacing:-0.2px">50.04 KB</div><div class="t" style="left:539.5px;letter-spacing:0.42px">08/07/2024 5:49 AM</div><div class="t perm" style="left:816.5px;letter-spacing:0.6px">0664</div><div class="t" style="left:912px">u9_site10_zmkq:u9_site10_zmkq</div><div class="btn" style="left:1352px;width:22px"><svg width="22" height="23" viewBox="0 0 22 23"><path d="M4.4 7.4 H17.2" stroke="#fff" stroke-width="1.5" stroke-linecap="round"/><path d="M8.2 7.2 Q8.2 4.9 10 4.9 H12 Q13.8 4.9 13.8 7.2" fill="none" stroke="#fff" stroke-width="1.4"/><path d="M5.9 7.6 L6.4 17.4 Q6.5 18.6 7.7 18.6 H14 Q15.2 18.6 15.3 17.4 L15.8 7.6" fill="none" stroke="#fff" stroke-width="1.4"/><path d="M8.6 10 V15.9 M11 10 V15.9 M13.3 10 V15.9" stroke="#fff" stroke-width="1.3"/></svg></div><div class="btn" style="left:1384px;width:25px"><svg width="25" height="23" viewBox="0 0 25 23"><path d="M15.4 5.55 H7.5 Q4.95 5.55 4.95 8.1 V14.2 Q4.95 16.75 7.5 16.75 H13.5 Q16.05 16.75 16.05 14.2 V12.6" fill="none" stroke="#fff" stroke-width="1.5"/><path d="M10.2 14.8 L10.9 11.6 L18.2 4.6 Q19.1 3.8 20 4.6 L20.6 5.2 Q21.4 6.1 20.6 7 L13.4 14.1 Z" fill="#fff"/><circle cx="11.8" cy="13.2" r="0.75" fill="#2f72b8"/></svg></div><div class="btn" style="left:1419px;width:26px"><svg width="26" height="23" viewBox="0 0 26 23"><path d="M5.2 8.3 L9.7 3.7 H14.4 Q15.2 3.7 15.2 4.5 V15.7 Q15.2 16.5 14.4 16.5 H6 Q5.2 16.5 5.2 15.7 Z" fill="none" stroke="#fff" stroke-width="1.4" stroke-linejoin="round"/><path d="M9.3 5 V8.1 H6.4" fill="none" stroke="#fff" stroke-width="1.2"/><path d="M11.3 12 L15.9 7.3 H20.2 Q21 7.3 21 8.1 V19.2 Q21 20 20.2 20 H12.1 Q11.3 20 11.3 19.2 Z" fill="#2e73bb" stroke="#fff" stroke-width="1.4" stroke-linejoin="round"/><path d="M15.5 8.6 V11.7 H12.5" fill="none" stroke="#fff" stroke-width="1.2"/></svg></div><div class="btn" style="left:1455px;width:24px"><svg width="24" height="23" viewBox="0 0 24 23"><path d="M9.9 3.3 H13.7 V8 H16.8 L11.8 13.4 L6.8 8 H9.9 Z" fill="#fff"/><path d="M3.8 13.2 Q3.8 12.8 4.2 12.8 H9.2 L11.8 15.3 L14.4 12.8 H19.4 Q19.8 12.8 19.8 13.2 V17.4 Q19.8 17.8 19.4 17.8 H4.2 Q3.8 17.8 3.8 17.4 Z" fill="#fff"/><circle cx="15.8" cy="15.4" r="0.6" fill="#2e73bb"/><circle cx="17.6" cy="15.4" r="0.6" fill="#2e73bb"/></svg></div></div><div class="row alt" style="top:644.70px"><div class="cb"></div><svg class="fi" style="left:46px;top:13.8px" width="17" height="14" viewBox="0 0 17 14"><path d="M4.5 2.5 L1 6.8 L4.5 11 M12.5 2.5 L16 6.8 L12.5 11 M9.8 1 L7 13" fill="none" stroke="#b8262a" stroke-width="1.2" stroke-linecap="round" stroke-linejoin="round"/></svg><div class="t" style="left:71.6px;letter-spacing:0.35px">wp-mail.php</div><div class="t" style="left:412px;letter-spacing:-0.2px">8.33 KB</div><div class="t" style="left:539.5px;letter-spacing:0.42px">08/07/2024 5:49 AM</div><div class="t perm" style="left:816.5px;letter-spacing:0.6px">0664</div><div class="t" style="left:912px">u9_site10_zmkq:u9_site10_zmkq</div><div class="btn" style="left:1352px;width:22px"><svg width="22" height="23" viewBox="0 0 22 23"><path d="M4.4 7.4 H17.2" stroke="#fff" stroke-width="1.5" stroke-linecap="round"/><path d="M8.2 7.2 Q8.2 4.9 10 4.9 H12 Q13.8 4.9 13.8 7.2" fill="none" stroke="#fff" stroke-width="1.4"/><path d="M5.9 7.6 L6.4 17.4 Q6.5 18.6 7.7 18.6 H14 Q15.2 18.6 15.3 17.4 L15.8 7.6" fill="none" stroke="#fff" stroke-width="1.4"/><path d="M8.6 10 V15.9 M11 10 V15.9 M13.3 10 V15.9" stroke="#fff" stroke-width="1.3"/></svg></div><div class="btn" style="left:1384px;width:25px"><svg width="25" height="23" viewBox="0 0 25 23"><path d="M15.4 5.55 H7.5 Q4.95 5.55 4.95 8.1 V14.2 Q4.95 16.75 7.5 16.75 H13.5 Q16.05 16.75 16.05 14.2 V12.6" fill="none" stroke="#fff" stroke-width="1.5"/><path d="M10.2 14.8 L10.9 11.6 L18.2 4.6 Q19.1 3.8 20 4.6 L20.6 5.2 Q21.4 6.1 20.6 7 L13.4 14.1 Z" fill="#fff"/><circle cx="11.8" cy="13.2" r="0.75" fill="#2f72b8"/></svg></div><div class="btn" style="left:1419px;width:26px"><svg width="26" height="23" viewBox="0 0 26 23"><path d="M5.2 8.3 L9.7 3.7 H14.4 Q15.2 3.7 15.2 4.5 V15.7 Q15.2 16.5 14.4 16.5 H6 Q5.2 16.5 5.2 15.7 Z" fill="none" stroke="#fff" stroke-width="1.4" stroke-linejoin="round"/><path d="M9.3 5 V8.1 H6.4" fill="none" stroke="#fff" stroke-width="1.2"/><path d="M11.3 12 L15.9 7.3 H20.2 Q21 7.3 21 8.1 V19.2 Q21 20 20.2 20 H12.1 Q11.3 20 11.3 19.2 Z" fill="#2e73bb" stroke="#fff" stroke-width="1.4" stroke-linejoin="round"/><path d="M15.5 8.6 V11.7 H12.5" fill="none" stroke="#fff" stroke-width="1.2"/></svg></div><div class="btn" style="left:1455px;width:24px"><svg width="24" height="23" viewBox="0 0 24 23"><path d="M9.9 3.3 H13.7 V8 H16.8 L11.8 13.4 L6.8 8 H9.9 Z" fill="#fff"/><path d="M3.8 13.2 Q3.8 12.8 4.2 12.8 H9.2 L11.8 15.3 L14.4 12.8 H19.4 Q19.8 12.8 19.8 13.2 V17.4 Q19.8 17.8 19.4 17.8 H4.2 Q3.8 17.8 3.8 17.4 Z" fill="#fff"/><circle cx="15.8" cy="15.4" r="0.6" fill="#2e73bb"/><circle cx="17.6" cy="15.4" r="0.6" fill="#2e73bb"/></svg></div></div><div class="row" style="top:685.04px"><div class="cb"></div><svg class="fi" style="left:46px;top:13.8px" width="17" height="14" viewBox="0 0 17 14"><path d="M4.5 2.5 L1 6.8 L4.5 11 M12.5 2.5 L16 6.8 L12.5 11 M9.8 1 L7 13" fill="none" stroke="#b8262a" stroke-width="1.2" stroke-linecap="round" stroke-linejoin="round"/></svg><div class="t" style="left:71.6px;letter-spacing:0.35px">wp-settings.php</div><div class="t" style="left:412px;letter-spacing:-0.2px">28.1 KB</div><div class="t" style="left:539.5px;letter-spacing:0.42px">08/07/2024 5:49 AM</div><div class="t perm" style="left:816.5px;letter-spacing:0.6px">0664</div><div class="t" style="left:912px">u9_site10_zmkq:u9_site10_zmkq</div><div class="btn" style="left:1352px;width:22px"><svg width="22" height="23" viewBox="0 0 22 23"><path d="M4.4 7.4 H17.2" stroke="#fff" stroke-width="1.5" stroke-linecap="round"/><path d="M8.2 7.2 Q8.2 4.9 10 4.9 H12 Q13.8 4.9 13.8 7.2" fill="none" stroke="#fff" stroke-width="1.4"/><path d="M5.9 7.6 L6.4 17.4 Q6.5 18.6 7.7 18.6 H14 Q15.2 18.6 15.3 17.4 L15.8 7.6" fill="none" stroke="#fff" stroke-width="1.4"/><path d="M8.6 10 V15.9 M11 10 V15.9 M13.3 10 V15.9" stroke="#fff" stroke-width="1.3"/></svg></div><div class="btn" style="left:1384px;width:25px"><svg width="25" height="23" viewBox="0 0 25 23"><path d="M15.4 5.55 H7.5 Q4.95 5.55 4.95 8.1 V14.2 Q4.95 16.75 7.5 16.75 H13.5 Q16.05 16.75 16.05 14.2 V12.6" fill="none" stroke="#fff" stroke-width="1.5"/><path d="M10.2 14.8 L10.9 11.6 L18.2 4.6 Q19.1 3.8 20 4.6 L20.6 5.2 Q21.4 6.1 20.6 7 L13.4 14.1 Z" fill="#fff"/><circle cx="11.8" cy="13.2" r="0.75" fill="#2f72b8"/></svg></div><div class="btn" style="left:1419px;width:26px"><svg width="26" height="23" viewBox="0 0 26 23"><path d="M5.2 8.3 L9.7 3.7 H14.4 Q15.2 3.7 15.2 4.5 V15.7 Q15.2 16.5 14.4 16.5 H6 Q5.2 16.5 5.2 15.7 Z" fill="none" stroke="#fff" stroke-width="1.4" stroke-linejoin="round"/><path d="M9.3 5 V8.1 H6.4" fill="none" stroke="#fff" stroke-width="1.2"/><path d="M11.3 12 L15.9 7.3 H20.2 Q21 7.3 21 8.1 V19.2 Q21 20 20.2 20 H12.1 Q11.3 20 11.3 19.2 Z" fill="#2e73bb" stroke="#fff" stroke-width="1.4" stroke-linejoin="round"/><path d="M15.5 8.6 V11.7 H12.5" fill="none" stroke="#fff" stroke-width="1.2"/></svg></div><div class="btn" style="left:1455px;width:24px"><svg width="24" height="23" viewBox="0 0 24 23"><path d="M9.9 3.3 H13.7 V8 H16.8 L11.8 13.4 L6.8 8 H9.9 Z" fill="#fff"/><path d="M3.8 13.2 Q3.8 12.8 4.2 12.8 H9.2 L11.8 15.3 L14.4 12.8 H19.4 Q19.8 12.8 19.8 13.2 V17.4 Q19.8 17.8 19.4 17.8 H4.2 Q3.8 17.8 3.8 17.4 Z" fill="#fff"/><circle cx="15.8" cy="15.4" r="0.6" fill="#2e73bb"/><circle cx="17.6" cy="15.4" r="0.6" fill="#2e73bb"/></svg></div></div><div class="row alt" style="top:725.38px"><div class="cb"></div><svg class="fi" style="left:46px;top:13.8px" width="17" height="14" viewBox="0 0 17 14"><path d="M4.5 2.5 L1 6.8 L4.5 11 M12.5 2.5 L16 6.8 L12.5 11 M9.8 1 L7 13" fill="none" stroke="#b8262a" stroke-width="1.2" stroke-linecap="round" stroke-linejoin="round"/></svg><div class="t" style="left:71.6px;letter-spacing:0.35px">wp-signup.php</div><div class="t" style="left:412px;letter-spacing:-0.2px">33.58 KB</div><div class="t" style="left:539.5px;letter-spacing:0.42px">08/07/2024 5:49 AM</div><div class="t perm" style="left:816.5px;letter-spacing:0.6px">0664</div><div class="t" style="left:912px">u9_site10_zmkq:u9_site10_zmkq</div><div class="btn" style="left:1352px;width:22px"><svg width="22" height="23" viewBox="0 0 22 23"><path d="M4.4 7.4 H17.2" stroke="#fff" stroke-width="1.5" stroke-linecap="round"/><path d="M8.2 7.2 Q8.2 4.9 10 4.9 H12 Q13.8 4.9 13.8 7.2" fill="none" stroke="#fff" stroke-width="1.4"/><path d="M5.9 7.6 L6.4 17.4 Q6.5 18.6 7.7 18.6 H14 Q15.2 18.6 15.3 17.4 L15.8 7.6" fill="none" stroke="#fff" stroke-width="1.4"/><path d="M8.6 10 V15.9 M11 10 V15.9 M13.3 10 V15.9" stroke="#fff" stroke-width="1.3"/></svg></div><div class="btn" style="left:1384px;width:25px"><svg width="25" height="23" viewBox="0 0 25 23"><path d="M15.4 5.55 H7.5 Q4.95 5.55 4.95 8.1 V14.2 Q4.95 16.75 7.5 16.75 H13.5 Q16.05 16.75 16.05 14.2 V12.6" fill="none" stroke="#fff" stroke-width="1.5"/><path d="M10.2 14.8 L10.9 11.6 L18.2 4.6 Q19.1 3.8 20 4.6 L20.6 5.2 Q21.4 6.1 20.6 7 L13.4 14.1 Z" fill="#fff"/><circle cx="11.8" cy="13.2" r="0.75" fill="#2f72b8"/></svg></div><div class="btn" style="left:1419px;width:26px"><svg width="26" height="23" viewBox="0 0 26 23"><path d="M5.2 8.3 L9.7 3.7 H14.4 Q15.2 3.7 15.2 4.5 V15.7 Q15.2 16.5 14.4 16.5 H6 Q5.2 16.5 5.2 15.7 Z" fill="none" stroke="#fff" stroke-width="1.4" stroke-linejoin="round"/><path d="M9.3 5 V8.1 H6.4" fill="none" stroke="#fff" stroke-width="1.2"/><path d="M11.3 12 L15.9 7.3 H20.2 Q21 7.3 21 8.1 V19.2 Q21 20 20.2 20 H12.1 Q11.3 20 11.3 19.2 Z" fill="#2e73bb" stroke="#fff" stroke-width="1.4" stroke-linejoin="round"/><path d="M15.5 8.6 V11.7 H12.5" fill="none" stroke="#fff" stroke-width="1.2"/></svg></div><div class="btn" style="left:1455px;width:24px"><svg width="24" height="23" viewBox="0 0 24 23"><path d="M9.9 3.3 H13.7 V8 H16.8 L11.8 13.4 L6.8 8 H9.9 Z" fill="#fff"/><path d="M3.8 13.2 Q3.8 12.8 4.2 12.8 H9.2 L11.8 15.3 L14.4 12.8 H19.4 Q19.8 12.8 19.8 13.2 V17.4 Q19.8 17.8 19.4 17.8 H4.2 Q3.8 17.8 3.8 17.4 Z" fill="#fff"/><circle cx="15.8" cy="15.4" r="0.6" fill="#2e73bb"/><circle cx="17.6" cy="15.4" r="0.6" fill="#2e73bb"/></svg></div></div><div class="row" style="top:765.72px"><div class="cb"></div><svg class="fi" style="left:46px;top:13.8px" width="17" height="14" viewBox="0 0 17 14"><path d="M4.5 2.5 L1 6.8 L4.5 11 M12.5 2.5 L16 6.8 L12.5 11 M9.8 1 L7 13" fill="none" stroke="#b8262a" stroke-width="1.2" stroke-linecap="round" stroke-linejoin="round"/></svg><div class="t" style="left:71.6px;letter-spacing:0.35px">wp-trackback.php</div><div class="t" style="left:412px;letter-spacing:-0.2px">4.77 KB</div><div class="t" style="left:539.5px;letter-spacing:0.42px">08/07/2024 5:49 AM</div><div class="t perm" style="left:816.5px;letter-spacing:0.6px">0664</div><div class="t" style="left:912px">u9_site10_zmkq:u9_site10_zmkq</div><div class="btn" style="left:1352px;width:22px"><svg width="22" height="23" viewBox="0 0 22 23"><path d="M4.4 7.4 H17.2" stroke="#fff" stroke-width="1.5" stroke-linecap="round"/><path d="M8.2 7.2 Q8.2 4.9 10 4.9 H12 Q13.8 4.9 13.8 7.2" fill="none" stroke="#fff" stroke-width="1.4"/><path d="M5.9 7.6 L6.4 17.4 Q6.5 18.6 7.7 18.6 H14 Q15.2 18.6 15.3 17.4 L15.8 7.6" fill="none" stroke="#fff" stroke-width="1.4"/><path d="M8.6 10 V15.9 M11 10 V15.9 M13.3 10 V15.9" stroke="#fff" stroke-width="1.3"/></svg></div><div class="btn" style="left:1384px;width:25px"><svg width="25" height="23" viewBox="0 0 25 23"><path d="M15.4 5.55 H7.5 Q4.95 5.55 4.95 8.1 V14.2 Q4.95 16.75 7.5 16.75 H13.5 Q16.05 16.75 16.05 14.2 V12.6" fill="none" stroke="#fff" stroke-width="1.5"/><path d="M10.2 14.8 L10.9 11.6 L18.2 4.6 Q19.1 3.8 20 4.6 L20.6 5.2 Q21.4 6.1 20.6 7 L13.4 14.1 Z" fill="#fff"/><circle cx="11.8" cy="13.2" r="0.75" fill="#2f72b8"/></svg></div><div class="btn" style="left:1419px;width:26px"><svg width="26" height="23" viewBox="0 0 26 23"><path d="M5.2 8.3 L9.7 3.7 H14.4 Q15.2 3.7 15.2 4.5 V15.7 Q15.2 16.5 14.4 16.5 H6 Q5.2 16.5 5.2 15.7 Z" fill="none" stroke="#fff" stroke-width="1.4" stroke-linejoin="round"/><path d="M9.3 5 V8.1 H6.4" fill="none" stroke="#fff" stroke-width="1.2"/><path d="M11.3 12 L15.9 7.3 H20.2 Q21 7.3 21 8.1 V19.2 Q21 20 20.2 20 H12.1 Q11.3 20 11.3 19.2 Z" fill="#2e73bb" stroke="#fff" stroke-width="1.4" stroke-linejoin="round"/><path d="M15.5 8.6 V11.7 H12.5" fill="none" stroke="#fff" stroke-width="1.2"/></svg></div><div class="btn" style="left:1455px;width:24px"><svg width="24" height="23" viewBox="0 0 24 23"><path d="M9.9 3.3 H13.7 V8 H16.8 L11.8 13.4 L6.8 8 H9.9 Z" fill="#fff"/><path d="M3.8 13.2 Q3.8 12.8 4.2 12.8 H9.2 L11.8 15.3 L14.4 12.8 H19.4 Q19.8 12.8 19.8 13.2 V17.4 Q19.8 17.8 19.4 17.8 H4.2 Q3.8 17.8 3.8 17.4 Z" fill="#fff"/><circle cx="15.8" cy="15.4" r="0.6" fill="#2e73bb"/><circle cx="17.6" cy="15.4" r="0.6" fill="#2e73bb"/></svg></div></div><div class="row alt" style="top:806.06px"><div class="cb"></div><svg class="fi" style="left:46px;top:13.8px" width="17" height="14" viewBox="0 0 17 14"><path d="M4.5 2.5 L1 6.8 L4.5 11 M12.5 2.5 L16 6.8 L12.5 11 M9.8 1 L7 13" fill="none" stroke="#b8262a" stroke-width="1.2" stroke-linecap="round" stroke-linejoin="round"/></svg><div class="t" style="left:71.6px;letter-spacing:0.35px">xmlrpc.php</div><div class="t" style="left:412px;letter-spacing:-0.2px">3.17 KB</div><div class="t" style="left:539.5px;letter-spacing:0.42px">08/07/2024 5:49 AM</div><div class="t perm" style="left:816.5px;letter-spacing:0.6px">0664</div><div class="t" style="left:912px">u9_site10_zmkq:u9_site10_zmkq</div><div class="btn" style="left:1352px;width:22px"><svg width="22" height="23" viewBox="0 0 22 23"><path d="M4.4 7.4 H17.2" stroke="#fff" stroke-width="1.5" stroke-linecap="round"/><path d="M8.2 7.2 Q8.2 4.9 10 4.9 H12 Q13.8 4.9 13.8 7.2" fill="none" stroke="#fff" stroke-width="1.4"/><path d="M5.9 7.6 L6.4 17.4 Q6.5 18.6 7.7 18.6 H14 Q15.2 18.6 15.3 17.4 L15.8 7.6" fill="none" stroke="#fff" stroke-width="1.4"/><path d="M8.6 10 V15.9 M11 10 V15.9 M13.3 10 V15.9" stroke="#fff" stroke-width="1.3"/></svg></div><div class="btn" style="left:1384px;width:25px"><svg width="25" height="23" viewBox="0 0 25 23"><path d="M15.4 5.55 H7.5 Q4.95 5.55 4.95 8.1 V14.2 Q4.95 16.75 7.5 16.75 H13.5 Q16.05 16.75 16.05 14.2 V12.6" fill="none" stroke="#fff" stroke-width="1.5"/><path d="M10.2 14.8 L10.9 11.6 L18.2 4.6 Q19.1 3.8 20 4.6 L20.6 5.2 Q21.4 6.1 20.6 7 L13.4 14.1 Z" fill="#fff"/><circle cx="11.8" cy="13.2" r="0.75" fill="#2f72b8"/></svg></div><div class="btn" style="left:1419px;width:26px"><svg width="26" height="23" viewBox="0 0 26 23"><path d="M5.2 8.3 L9.7 3.7 H14.4 Q15.2 3.7 15.2 4.5 V15.7 Q15.2 16.5 14.4 16.5 H6 Q5.2 16.5 5.2 15.7 Z" fill="none" stroke="#fff" stroke-width="1.4" stroke-linejoin="round"/><path d="M9.3 5 V8.1 H6.4" fill="none" stroke="#fff" stroke-width="1.2"/><path d="M11.3 12 L15.9 7.3 H20.2 Q21 7.3 21 8.1 V19.2 Q21 20 20.2 20 H12.1 Q11.3 20 11.3 19.2 Z" fill="#2e73bb" stroke="#fff" stroke-width="1.4" stroke-linejoin="round"/><path d="M15.5 8.6 V11.7 H12.5" fill="none" stroke="#fff" stroke-width="1.2"/></svg></div><div class="btn" style="left:1455px;width:24px"><svg width="24" height="23" viewBox="0 0 24 23"><path d="M9.9 3.3 H13.7 V8 H16.8 L11.8 13.4 L6.8 8 H9.9 Z" fill="#fff"/><path d="M3.8 13.2 Q3.8 12.8 4.2 12.8 H9.2 L11.8 15.3 L14.4 12.8 H19.4 Q19.8 12.8 19.8 13.2 V17.4 Q19.8 17.8 19.4 17.8 H4.2 Q3.8 17.8 3.8 17.4 Z" fill="#fff"/><circle cx="15.8" cy="15.4" r="0.6" fill="#2e73bb"/><circle cx="17.6" cy="15.4" r="0.6" fill="#2e73bb"/></svg></div></div><div class="vl" style="left:37px"></div><div class="vl" style="left:403px"></div><div class="vl" style="left:530px"></div><div class="vl" style="left:808px"></div><div class="vl" style="left:904px"></div><div class="vl" style="left:1338px"></div></div>
<svg style="position:absolute;left:332px;top:299px;z-index:9" width="16" height="22" viewBox="0 0 16 22"><path d="M3.5 2.6 V14.8 L6.3 12 L8.5 18 L11.1 17 L8.9 11.3 L12.6 11.3 Z" fill="#000" stroke="#fff" stroke-width="1.8" stroke-linejoin="round" paint-order="stroke"/></svg>
</body></html>
